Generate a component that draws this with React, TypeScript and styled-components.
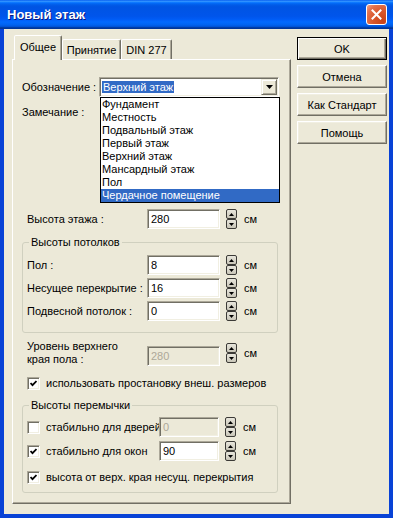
import React from "react";
import styled, { createGlobalStyle, css } from "styled-components";

const GlobalStyle = createGlobalStyle`
  html, body {
    margin: 0;
    padding: 0;
    background: #ffffff;
  }
  body {
    font-family: "Liberation Sans", Arial, sans-serif;
    font-size: 11px;
    color: #000;
  }
`;

const FONT = `"Liberation Sans", Arial, sans-serif`;

// Window chrome
const Window = styled.div`
  width: 393px;
  height: 518px;
  display: flex;
  flex-direction: column;
  overflow: hidden;
`;

const TitleBar = styled.div`
  height: 29px;
  flex: none;
  display: flex;
  align-items: center;
  justify-content: space-between;
  padding: 0 6px 0 7px;
  background: linear-gradient(
    to bottom,
    #0058ee 0%,
    #3593ff 4%,
    #288eff 6%,
    #127dff 8%,
    #036ffc 10%,
    #0262ee 14%,
    #0057e5 20%,
    #0054e3 24%,
    #0055eb 56%,
    #005bf5 66%,
    #026afe 76%,
    #0062ef 86%,
    #0052d6 92%,
    #0040ab 94%,
    #003092 100%
  );
`;

const Title = styled.span`
  font-family: ${FONT};
  font-weight: bold;
  font-size: 13px;
  color: #fff;
  text-shadow: 1px 1px 0 #0a1883;
`;

const CloseButton = styled.div`
  width: 21px;
  height: 21px;
  box-sizing: border-box;
  border: 1px solid #fff;
  border-radius: 3px;
  display: flex;
  align-items: center;
  justify-content: center;
  background: radial-gradient(
    circle at 85% 85%,
    #c94316 0%,
    #d9572b 45%,
    #e3714c 75%,
    #f0a48a 100%
  );
`;

const Frame = styled.div`
  flex: 1;
  display: flex;
  border: 4px solid #0842d6;
  border-top: none;
  background: #ece9d8;
  padding: 6px 2px 0 8px;
  gap: 6px;
`;

// Tabs
const TabColumn = styled.div`
  width: 279px;
  display: flex;
  flex-direction: column;
`;

const TabStrip = styled.div`
  height: 24px;
  display: flex;
  align-items: flex-end;
  padding-left: 2px;
`;

const Tab = styled.div<{ $active?: boolean; $width: number }>`
  box-sizing: border-box;
  width: ${(p) => p.$width}px;
  height: 20px;
  display: flex;
  align-items: center;
  justify-content: center;
  border: 1px solid;
  border-bottom: none;
  border-color: #fff #716f64 transparent #fff;
  box-shadow: inset -1px 0 0 #aca899;
  border-radius: 2px 2px 0 0;
  background: #ece9d8;
  font-size: 11px;

  ${(p) =>
    p.$active &&
    css`
      height: 25px;
      margin-bottom: -1px;
      position: relative;
      z-index: 1;
      padding-bottom: 2px;
    `}
`;

const Panel = styled.div`
  height: 445px;
  box-sizing: border-box;
  border: 1px solid;
  border-color: #fff #716f64 #716f64 #fff;
  box-shadow: inset -1px -1px 0 #aca899;
  padding: 17px 0 0 9px;
  display: flex;
  flex-direction: column;
`;

// Rows and fields
const Row = styled.div<{ $indent?: number; $top?: number; $height?: number }>`
  display: flex;
  align-items: center;
  flex: none;
  margin-left: ${(p) => p.$indent ?? 0}px;
  margin-top: ${(p) => p.$top ?? 0}px;
  height: ${(p) => p.$height ?? 20}px;
  position: relative;
`;

const FieldLabel = styled.span<{ $width: number }>`
  width: ${(p) => p.$width}px;
  flex: none;
  white-space: nowrap;
  line-height: 13px;
`;

const TextBox = styled.div<{ $width: number; $disabled?: boolean; $bottom?: boolean }>`
  width: ${(p) => p.$width}px;
  height: 20px;
  box-sizing: border-box;
  flex: none;
  align-self: ${(p) => (p.$bottom ? "flex-end" : "auto")};
  border: 1px solid;
  border-color: #aca899 #fff #fff #aca899;
  box-shadow: inset 1px 1px 0 #716f64, inset -1px -1px 0 #f1efe2;
  background: ${(p) => (p.$disabled ? "#ece9d8" : "#fff")};
  color: ${(p) => (p.$disabled ? "#aca899" : "#000")};
  padding-left: 3px;
  line-height: 18px;
`;

const Spinner = styled.div`
  width: 11px;
  height: 20px;
  flex: none;
  margin-left: 6px;
  display: flex;
  flex-direction: column;
`;

const SpinHalf = styled.div`
  flex: 1;
  box-sizing: border-box;
  border: 1px solid #3b3a36;
  border-radius: 2px;
  background: linear-gradient(#e8e6dc, #c9c6b8);
  display: flex;
  align-items: center;
  justify-content: center;
`;

const Unit = styled.span`
  margin-left: 7px;
`;

const Combo = styled.div`
  width: 180px;
  height: 20px;
  box-sizing: border-box;
  position: relative;
  display: flex;
  align-items: center;
  padding: 2px 1px 2px 2px;
  border: 1px solid;
  border-color: #aca899 #fff #fff #aca899;
  box-shadow: inset 1px 1px 0 #716f64, inset -1px -1px 0 #f1efe2;
  background: #fff;
`;

const ComboText = styled.div`
  flex: 1;
  display: flex;
  align-items: center;
`;

const Selected = styled.span`
  background: #316ac5;
  color: #fff;
  line-height: 12px;
  padding: 0 1px;
`;

const DropButton = styled.div`
  width: 16px;
  height: 16px;
  box-sizing: border-box;
  border: 1px solid;
  border-color: #f1efe2 #716f64 #716f64 #f1efe2;
  box-shadow: inset 1px 1px 0 #fff, inset -1px -1px 0 #aca899;
  background: #ece9d8;
  display: flex;
  align-items: center;
  justify-content: center;
`;

const DropList = styled.ul`
  position: absolute;
  left: 0;
  top: 19px;
  width: 180px;
  box-sizing: border-box;
  margin: 0;
  padding: 0;
  list-style: none;
  background: #fff;
  border: 1px solid #000;
  z-index: 5;
`;

const DropItem = styled.li<{ $active?: boolean }>`
  height: 13px;
  line-height: 13px;
  padding-left: 1px;
  white-space: nowrap;
  ${(p) =>
    p.$active &&
    css`
      background: #316ac5;
      color: #fff;
    `}
`;

const Group = styled.fieldset<{ $top: number; $bottom: number }>`
  width: 256px;
  box-sizing: border-box;
  margin: ${(p) => p.$top}px 0 0 0;
  padding: 0 4px ${(p) => p.$bottom}px 4px;
  border: 1px solid #d0d0bf;
  border-radius: 3px;
  min-inline-size: 0;
  display: flex;
  flex-direction: column;
`;

const Legend = styled.legend`
  margin-left: 2px;
  padding: 0 2px;
  line-height: 13px;
  font-size: 11px;
`;

const CheckBox = styled.div`
  width: 13px;
  height: 13px;
  box-sizing: border-box;
  flex: none;
  border: 1px solid;
  border-color: #aca899 #fff #fff #aca899;
  box-shadow: inset 1px 1px 0 #716f64, inset -1px -1px 0 #f1efe2;
  background: #fff;
  display: flex;
  align-items: center;
  justify-content: center;
`;

const CheckLabel = styled.span<{ $width?: number }>`
  margin-left: 6px;
  white-space: nowrap;
  ${(p) =>
    p.$width &&
    css`
      width: ${p.$width}px;
      flex: none;
    `}
`;

// Right-hand buttons
const ButtonColumn = styled.div`
  width: 90px;
  padding-top: 2px;
  display: flex;
  flex-direction: column;
  gap: 5px;
`;

const ActionButton = styled.button<{ $default?: boolean }>`
  width: 90px;
  height: 23px;
  box-sizing: border-box;
  padding: 0;
  font-family: ${FONT};
  font-size: 11px;
  color: #000;
  background: #ece9d8;
  border: 1px solid;
  border-color: #fff #716f64 #716f64 #fff;
  box-shadow: inset -1px -1px 0 #aca899, inset 1px 1px 0 #f1efe2;

  ${(p) =>
    p.$default &&
    css`
      border-color: #000;
      box-shadow: inset 1px 1px 0 #fff, inset -1px -1px 0 #716f64,
        inset -2px -2px 0 #aca899;
    `}
`;

const SpinBox = () => (
  <Spinner>
    <SpinHalf>
      <svg width="5" height="3" viewBox="0 0 5 3">
        <polygon points="2.5,0 5,3 0,3" fill="#000" />
      </svg>
    </SpinHalf>
    <SpinHalf>
      <svg width="5" height="3" viewBox="0 0 5 3">
        <polygon points="0,0 5,0 2.5,3" fill="#000" />
      </svg>
    </SpinHalf>
  </Spinner>
);

const Check = ({ checked }: { checked?: boolean }) => (
  <CheckBox>
    {checked && (
      <svg width="7" height="7" viewBox="0 0 7 7">
        <polyline
          points="0.5,3 2.5,5.2 6.5,1"
          fill="none"
          stroke="#000"
          strokeWidth="1.8"
        />
      </svg>
    )}
  </CheckBox>
);

const floorTypes = [
  "Фундамент",
  "Местность",
  "Подвальный этаж",
  "Первый этаж",
  "Верхний этаж",
  "Мансардный этаж",
  "Пол",
  "Чердачное помещение",
];

const ceilings = [
  { label: "Пол :", value: "8" },
  { label: "Несущее перекрытие :", value: "16" },
  { label: "Подвесной потолок :", value: "0" },
];

export default function App() {
  return (
    <>
      <GlobalStyle />
      <Window>
        <TitleBar>
          <Title>Новый этаж</Title>
          <CloseButton>
            <svg width="11" height="11" viewBox="0 0 11 11">
              <path
                d="M1.5 1.5 L9.5 9.5 M9.5 1.5 L1.5 9.5"
                stroke="#fff"
                strokeWidth="2"
                strokeLinecap="square"
              />
            </svg>
          </CloseButton>
        </TitleBar>

        <Frame>
          <TabColumn>
            <TabStrip>
              <Tab $active $width={48}>
                Общее
              </Tab>
              <Tab $width={59}>Принятие</Tab>
              <Tab $width={51}>DIN 277</Tab>
            </TabStrip>

            <Panel>
              <Row>
                <FieldLabel $width={77}>Обозначение :</FieldLabel>
                <Combo>
                  <ComboText>
                    <Selected>Верхний этаж</Selected>
                  </ComboText>
                  <DropButton>
                    <svg width="7" height="4" viewBox="0 0 7 4">
                      <polygon points="0,0 7,0 3.5,4" fill="#000" />
                    </svg>
                  </DropButton>
                  <DropList>
                    {floorTypes.map((t, i) => (
                      <DropItem key={t} $active={i === floorTypes.length - 1}>
                        {t}
                      </DropItem>
                    ))}
                  </DropList>
                </Combo>
              </Row>

              <Row $top={5}>
                <FieldLabel $width={77}>Замечание :</FieldLabel>
              </Row>

              <Row $indent={5} $top={87}>
                <FieldLabel $width={120}>Высота этажа :</FieldLabel>
                <TextBox $width={73}>280</TextBox>
                <SpinBox />
                <Unit>см</Unit>
              </Row>

              <Group $top={7} $bottom={11}>
                <Legend>Высоты потолков</Legend>
                {ceilings.map((c, i) => (
                  <Row key={c.label} $top={i === 0 ? 6 : 3}>
                    <FieldLabel $width={120}>{c.label}</FieldLabel>
                    <TextBox $width={73}>{c.value}</TextBox>
                    <SpinBox />
                    <Unit>см</Unit>
                  </Row>
                ))}
              </Group>

              <Row $indent={5} $top={7} $height={26}>
                <FieldLabel $width={120}>
                  Уровень верхнего
                  <br />
                  края пола :
                </FieldLabel>
                <TextBox $width={73} $disabled $bottom>
                  280
                </TextBox>
                <SpinBox />
                <Unit>см</Unit>
              </Row>

              <Row $indent={5} $top={10} $height={14}>
                <Check checked />
                <CheckLabel>использовать простановку внеш. размеров</CheckLabel>
              </Row>

              <Group $top={9} $bottom={8}>
                <Legend>Высоты перемычки</Legend>
                <Row $top={5}>
                  <Check />
                  <CheckLabel $width={113}>стабильно для дверей</CheckLabel>
                  <TextBox $width={60} $disabled>
                    0
                  </TextBox>
                  <SpinBox />
                  <Unit>см</Unit>
                </Row>
                <Row $top={4}>
                  <Check checked />
                  <CheckLabel $width={113}>стабильно для окон</CheckLabel>
                  <TextBox $width={60}>90</TextBox>
                  <SpinBox />
                  <Unit>см</Unit>
                </Row>
                <Row $top={9} $height={14}>
                  <Check checked />
                  <CheckLabel>высота от верх. края несущ. перекрытия</CheckLabel>
                </Row>
              </Group>
            </Panel>
          </TabColumn>

          <ButtonColumn>
            <ActionButton $default>OK</ActionButton>
            <ActionButton>Отмена</ActionButton>
            <ActionButton>Как Стандарт</ActionButton>
            <ActionButton>Помощь</ActionButton>
          </ButtonColumn>
        </Frame>
      </Window>
    </>
  );
}
